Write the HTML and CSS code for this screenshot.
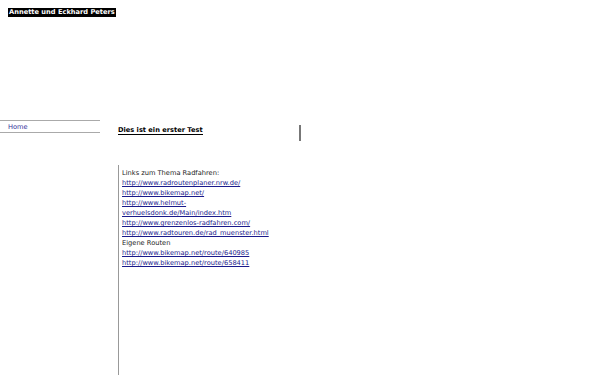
FILE: index.html
```html
<!DOCTYPE html>
<html lang="de">
<head>
  <meta charset="UTF-8">
  <title>Annette und Eckhard Peters</title>
  <link rel="stylesheet" href="styles.css">
</head>
<body>
  <header class="kopf">
    <h1>Annette und Eckhard Peters</h1>
  </header>
  <div class="seite">
    <nav class="menu">
      <a href="#">Home</a>
    </nav>
    <main class="inhalt">
      <div class="titel">
        <h2>Dies ist ein erster Test</h2>
      </div>
      <div class="text">
        Links zum Thema Radfahren:<br>
        <a href="#">http://www.radroutenplaner.nrw.de/</a><br>
        <a href="#">http://www.bikemap.net/</a><br>
        <a href="#">http://www.helmut-<br>verhuelsdonk.de/Main/index.htm</a><br>
        <a href="#">http://www.grenzenlos-radfahren.com/</a><br>
        <a href="#">http://www.radtouren.de/rad_muenster.html</a><br>
        Eigene Routen<br>
        <a href="#">http://www.bikemap.net/route/640985</a><br>
        <a href="#">http://www.bikemap.net/route/658411</a>
      </div>
    </main>
  </div>
</body>
</html>
```

FILE: styles.css
```css
body {
  margin: 8px 8px 0 0;
  font-family: "DejaVu Sans", Verdana, sans-serif;
  font-size: 6.66px;
  color: #222;
  background: #fff;
}
a {
  color: #1a1a8c;
}
.kopf {
  padding-left: 8px;
  height: 104px;
}
.kopf h1 {
  display: inline-block;
  margin: 0;
  padding: 0 1px;
  font-size: 6.66px;
  line-height: 9px;
  background: #000;
  color: #fff;
}
.seite {
  display: flex;
  gap: 18px;
}
.menu {
  width: 100px;
  margin-top: 8px;
  border-top: 1px solid #aaa;
  border-bottom: 1px solid #aaa;
  padding: 2px 0 1px 8px;
  box-sizing: border-box;
  align-self: flex-start;
  line-height: 8px;
}
.menu a {
  text-decoration: none;
  color: #33339a;
}
.inhalt {
  flex: 1;
}
.titel {
  width: 181px;
  height: 16px;
  margin-top: 13px;
  border-right: 2px solid #777;
}
.titel h2 {
  margin: 0;
  padding-top: 1px;
  font-size: 6.66px;
  line-height: 8px;
  display: inline-block;
  border-bottom: 1px solid #000;
  color: #000;
}
.text {
  margin-top: 24px;
  border-left: 1px solid #999;
  padding: 3px 0 0 3px;
  line-height: 10px;
  min-height: 220px;
  width: 160px;
}
```
